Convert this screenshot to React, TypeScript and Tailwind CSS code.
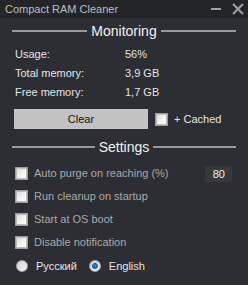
const font = { fontFamily: '"Liberation Sans", Arial, sans-serif' };

function Heading({ title }: { title: string }) {
  return (
    <div className="flex items-center gap-[4px] px-[12px]">
      <div className="flex-1 h-[2px] bg-[#9a9a9a]" />
      <span className="text-[14px] leading-[18px] text-[#f0f0f0]">{title}</span>
      <div className="flex-1 h-[2px] bg-[#9a9a9a]" />
    </div>
  );
}

function CheckBox() {
  return (
    <div className="w-[13px] h-[13px] border border-[#9c9c9c] bg-gradient-to-br from-[#d8d8d8] via-[#f2f2f2] to-[#ffffff] shadow-[inset_0_0_0_1px_#bdbdbd]" />
  );
}

function Radio({ checked }: { checked?: boolean }) {
  return (
    <div className="w-[12px] h-[12px] rounded-full border border-[#a6a6a6] bg-gradient-to-br from-[#cfcfcf] to-[#f4f4f4] flex items-center justify-center">
      {checked && <div className="w-[6px] h-[6px] rounded-full bg-[#1f7fd0] border border-[#0d4f8a]" />}
    </div>
  );
}

function StatRow({ label, value }: { label: string; value: string }) {
  return (
    <div className="flex items-center h-[19px] pl-[15px]">
      <span className="w-[110px]">{label}</span>
      <span>{value}</span>
    </div>
  );
}

const settings = [
  'Auto purge on reaching (%)',
  'Run cleanup on startup',
  'Start at OS boot',
  'Disable notification',
];

export default function App() {
  return (
    <div style={font} className="w-[248px] h-[285px] bg-[#2d2e33] text-[11px] text-[#e4e4e4] flex flex-col overflow-hidden">
      <div className="h-[18px] bg-[#242529] flex items-center pl-[5px] pr-[4px]">
        <span className="flex-1 text-[11px] text-[#bdbdbd]">Compact RAM Cleaner</span>
        <div className="w-[10px] h-[2px] bg-[#a0a0a0] mr-[11px]" />
        <svg width="12" height="12" viewBox="0 0 12 12">
          <path d="M1 1L11 11M11 1L1 11" stroke="#a0a0a0" strokeWidth="2" />
        </svg>
      </div>

      <div className="mt-[4px]">
        <Heading title="Monitoring" />
      </div>

      <div className="mt-[5px]">
        <StatRow label="Usage:" value="56%" />
        <StatRow label="Total memory:" value="3,9 GB" />
        <StatRow label="Free memory:" value="1,7 GB" />
      </div>

      <div className="flex items-center mt-[7px] pl-[14px]">
        <button className="w-[134px] h-[20px] bg-[#c2c2c2] text-[#151515] text-[11px]">Clear</button>
        <div className="ml-[7px]">
          <CheckBox />
        </div>
        <span className="ml-[6px]">+ Cached</span>
      </div>

      <div className="mt-[9px]">
        <Heading title="Settings" />
      </div>

      <div className="mt-[6px] flex flex-col">
        {settings.map((s, i) => (
          <div key={s} className="flex items-center h-[23px] pl-[15px] text-[#a9a9a9]">
            <CheckBox />
            <span className="ml-[6px] flex-1">{s}</span>
            {i === 0 && (
              <div className="w-[27px] h-[16px] bg-[#38393e] text-[#eeeeee] text-right pr-[7px] leading-[16px] mr-[16px]">80</div>
            )}
          </div>
        ))}
      </div>

      <div className="flex items-center h-[24px] pl-[16px]">
        <Radio />
        <span className="ml-[8px] mr-[12px]">Русский</span>
        <Radio checked />
        <span className="ml-[8px]">English</span>
      </div>
    </div>
  );
}
